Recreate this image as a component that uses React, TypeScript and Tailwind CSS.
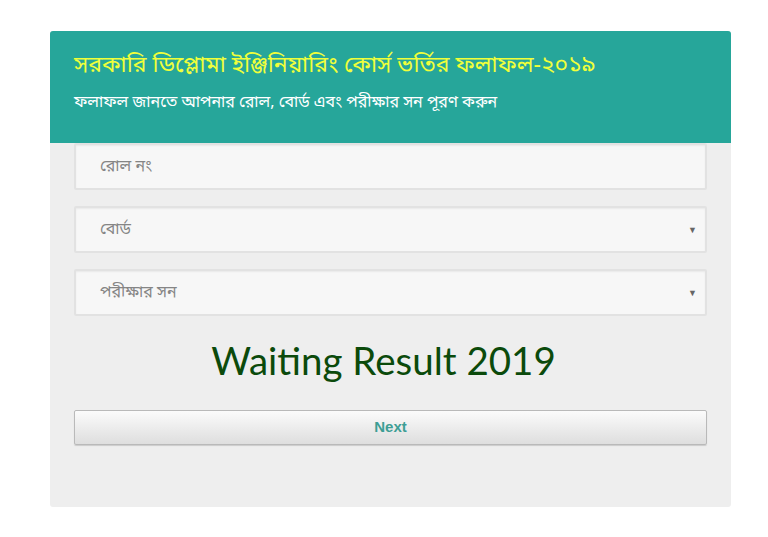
import React from 'react';

const bn = { fontFamily: '"Noto Sans Bengali", "Noto Sans", "Liberation Sans", sans-serif' };

const Field = ({ label, select }: { label: string; select?: boolean }) => (
  <div className="flex h-[47px] items-center justify-between rounded-[2px] border-2 border-[#e2e2e2] bg-[#f7f7f7] pl-[24px] pr-[8px] shadow-[inset_0_1px_2px_rgba(0,0,0,0.06)]">
    <span className="text-[16px] text-[#858585]" style={bn}>{label}</span>
    {select && <span className="text-[9px] leading-none text-[#666]">▼</span>}
  </div>
);

export default function App() {
  return (
    <div className="min-h-[537px] w-full bg-white pt-[31px] pl-[50px]">
      <div className="w-[681px] h-[476px] overflow-hidden rounded-[3px] bg-[#eeeeee]">
        <div className="h-[112px] bg-[#26a69a] px-[24px] pt-[18px]">
          <h1 className="text-[23px] leading-[34px] text-[#f0ff3a]" style={bn}>
            সরকারি ডিপ্লোমা ইঞ্জিনিয়ারিং কোর্স ভর্তির ফলাফল-২০১৯
          </h1>
          <p className="mt-[9px] text-[16px] leading-[22px] text-white" style={bn}>
            ফলাফল জানতে আপনার রোল, বোর্ড এবং পরীক্ষার সন পূরণ করুন
          </p>
        </div>
        <div className="flex flex-col px-[24px]">
          <div className="flex flex-col gap-[16px]">
            <Field label="রোল নং" />
            <Field label="বোর্ড" select />
            <Field label="পরীক্ষার সন" select />
          </div>
          <div
            className="mt-[19px] pr-[14px] text-center text-[38.5px] leading-[50px] text-[#0b4a0b]"
            style={{ fontFamily: 'Lato, "Open Sans", sans-serif' }}
          >
            Waiting Result 2019
          </div>
          <button
            className="mt-[25px] h-[35px] w-full rounded-[2px] border border-[#b9b9b9] bg-gradient-to-b from-[#fbfbfb] to-[#dedede] text-[15px] font-bold text-[#3d9e95] shadow-[0_1px_1px_rgba(0,0,0,0.15)]"
            style={{ fontFamily: '"Liberation Sans", Arial, sans-serif' }}
          >
            Next
          </button>
        </div>
      </div>
    </div>
  );
}
